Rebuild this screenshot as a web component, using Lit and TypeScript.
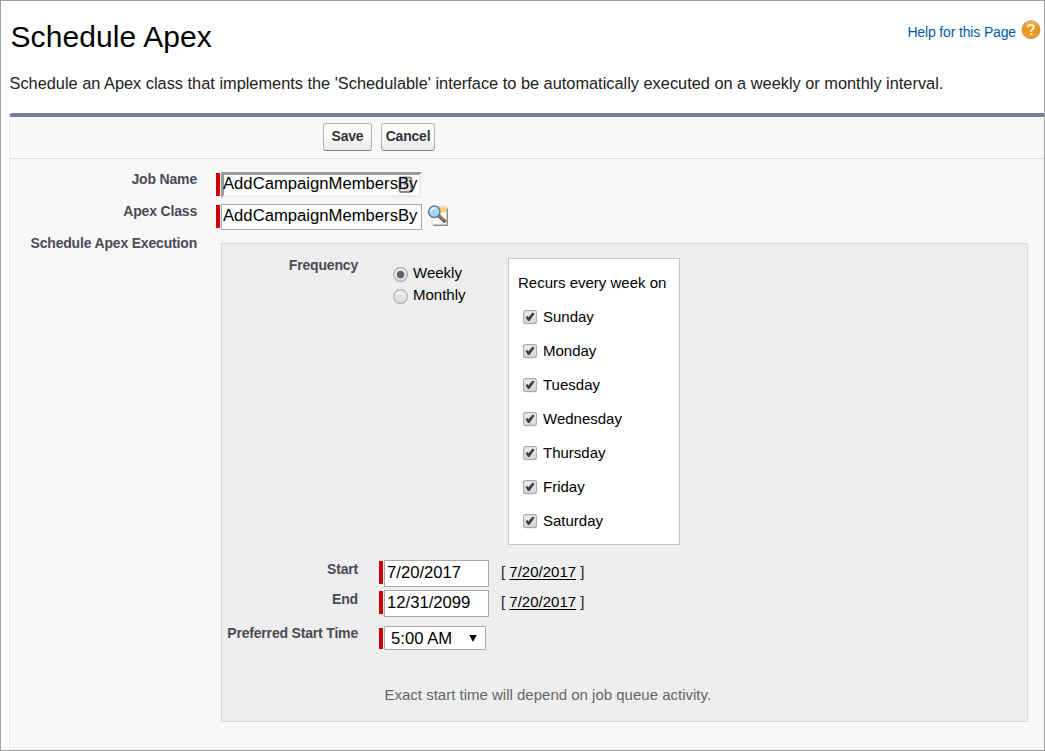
import { LitElement, html, css, svg } from "lit";
import { customElement, property, state } from "lit/decorators.js";

@customElement("tick-box")
class TickBox extends LitElement {
  @property({ type: Boolean }) checked = false;
  static styles = css`
    :host { display: block; width: 14px; height: 15px; }
    svg { display: block; }
  `;
  render() {
    return html`<svg width="14" height="15" viewBox="0 0 14 15">
      <defs><linearGradient id="g" x1="0" y1="0" x2="0" y2="1"><stop offset="0" stop-color="#eeeeee"/><stop offset="1" stop-color="#d9d9d9"/></linearGradient></defs>
      <rect x="0.8" y="1.6" width="12.4" height="12.8" rx="2" fill="#e3e3e3"/>
      <rect x="0.6" y="0.6" width="12.8" height="12.8" rx="2" fill="url(#g)" stroke="#acacac" stroke-width="1.1"/>
      ${this.checked ? svg`<path d="M2.5 7.3 L4.2 5.9 L5.6 7.2 L9.6 2.5 L11.6 3.8 L6.5 11 L5 11 Z" fill="#404040"/>` : ""}
    </svg>`;
  }
}

@customElement("radio-dot")
class RadioDot extends LitElement {
  @property({ type: Boolean }) checked = false;
  static styles = css`
    :host { display: block; width: 15px; height: 16px; }
    svg { display: block; }
  `;
  render() {
    return html`<svg width="15" height="16" viewBox="0 0 15 16">
      <defs><linearGradient id="g" x1="0" y1="0" x2="0" y2="1"><stop offset="0" stop-color="#efefef"/><stop offset="1" stop-color="#dcdcdc"/></linearGradient></defs>
      <circle cx="7.5" cy="8.3" r="7" fill="#dcdcdc"/>
      <circle cx="7.5" cy="7.5" r="6.9" fill="url(#g)" stroke="#acacac" stroke-width="1.1"/>
      ${this.checked ? svg`<circle cx="7.5" cy="7.5" r="3.7" fill="#636363"/>` : ""}
    </svg>`;
  }
}

@customElement("app-root")
class AppRoot extends LitElement {
  @state() frequency = "Weekly";
  days = ["Sunday", "Monday", "Tuesday", "Wednesday", "Thursday", "Friday", "Saturday"];

  static styles = css`
    :host {
      display: block;
      font-family: "Liberation Sans", Arial, sans-serif;
      font-size: 15px;
      color: #000;
    }
    * { box-sizing: border-box; }
    .page {
      width: 1045px;
      height: 751px;
      border: 1px solid #a2a2a2;
      background: #fff;
      padding-left: 8px;
      overflow: hidden;
      display: flex;
      flex-direction: column;
    }
    .head { display: flex; justify-content: space-between; height: 66px; }
    h1 { margin: 0; padding: 18px 0 0 1.5px; font-weight: 400; font-size: 30px; letter-spacing: 0.1px; line-height: 36px; }
    .help { display: flex; gap: 5px; padding: 19px 3px 0 0; height: 60px; }
    .help a { font-size: 14px; letter-spacing: -0.15px; line-height: 25px; color: #015ba7; }
    .help svg { display: block; }
    .intro { margin: 0; height: 46px; padding: 5px 0 0 0.5px; font-size: 16.35px; line-height: 22px; color: #222; white-space: nowrap; }
    .block {
      flex: 1;
      background: #f8f8f8;
      border-top: 4px solid #747e96;
      border-left: 1px solid #eaeaea;
      border-top-left-radius: 4px;
    }
    .buttons { height: 42px; border-bottom: 1px solid #dbdbdb; padding: 6px 0 0 313px; display: flex; gap: 9px; }
    button {
      height: 28px;
      padding: 0 0 2px;
      margin: 0;
      border: 1px solid #b5b5b5;
      border-bottom-color: #7f7f7f;
      border-radius: 3px;
      background: linear-gradient(#fff 0%, #fcfcfc 45%, #e9e9ea 100%);
      font: bold 14px/24px "Liberation Sans", Arial, sans-serif;
      letter-spacing: -0.2px;
      color: #333;
    }
    .save { width: 49px; }
    .cancel { width: 54px; }
    .form { padding-top: 13px; }
    .row { display: flex; height: 32px; }
    .last { height: auto; padding-top: 7px; }
    .label {
      font-weight: bold;
      font-size: 14px;
      letter-spacing: -0.18px;
      line-height: 14px;
      color: #4a4a56;
      text-align: right;
      white-space: nowrap;
    }
    .row > .label { width: 187px; margin-right: 19px; }
    .last > .label { margin: -7px 24px 0 0; }
    .req { width: 4px; height: 23px; background: #c00; margin: 1px 0 0; flex: none; }
    input {
      font: 16.67px "Liberation Sans", Arial, sans-serif;
      color: #000;
      appearance: none;
      border-radius: 0;
      background: #fff;
      margin: 0;
      outline: 0;
      border: 1px solid #a9a9a9;
      display: block;
    }
    .inset {
      width: 201px; height: 26px;
      border: 3px solid;
      border-color: #9a9a9a #eee #eee #9a9a9a;
      margin-left: 1px;
      background: #fff;
      display: flex;
    }
    .inset input { border: 0; width: 197px; flex: none; padding: 0; height: 20px; margin: -1px -2px 0 -1px; background: transparent; position: relative; }
    .stack { display: flex; position: relative; }
    .chip { position: absolute; right: 8px; top: 4px; }
    .lookup { width: 201px; height: 26px; padding: 0 0 3px 1px; margin-left: 1px; }
    .lens { display: block; margin: 1px 0 0 5px; }
    .panel { width: 807px; height: 479px; background: #eee; border: 1px solid #d9d9d9; padding-top: 14px; }
    .freq { display: flex; height: 287px; }
    .panel .label { width: 136px; flex: none; }
    .radios { margin-left: 35px; width: 115px; padding-top: 4px; }
    .radio { display: flex; gap: 5px; height: 22px; line-height: 22px; }
    .radio radio-dot { margin-top: 5px; }
    .box { width: 172px; height: 287px; background: #fff; border: 1px solid #c7c7c7; padding: 7px 0 0 9px; line-height: 34px; white-space: nowrap; }
    .day { display: flex; height: 34px; }
    .day tick-box { margin: 10px 6px 0 5px; }
    .line { display: flex; height: 30px; }
    .line .req { margin: 1px 0 0 21px; }
    .dates { padding-top: 15px; }
    .line input { width: 105px; height: 27px; padding: 0 0 2px 2px; margin-left: 1px; }
    .line .label { line-height: 18px; }
    .quick { margin-left: 12px; line-height: 24px; color: #222; white-space: pre; }
    .quick u { color: #000; text-underline-offset: 2px; text-decoration-thickness: 1px; }
    .time { padding-top: 6px; height: 66px; }
    .time .label { line-height: 14px; }
    .time .req { height: 21px; margin-top: 2px; }
    .select {
      width: 102px; height: 24px; margin-left: 1px;
      border: 1px solid #a9a9a9; border-radius: 1px; background: #fff;
      display: flex; justify-content: space-between;
      padding: 0 8px 0 6px;
      font-size: 16.67px; line-height: 23px;
    }
    .select svg { display: block; margin-top: 8px; }
    .note { padding: 0 0 0 162.5px; margin-top: -1px; line-height: 20px; color: #666; }
  `;

  dateLine(label: string, value: string) {
    return html`<div class="line">
      <span class="label">${label}</span><i class="req"></i>
      <input aria-label=${label} .value=${value} />
      <span class="quick">[ <u>7/20/2017</u> ]</span>
    </div>`;
  }

  render() {
    return html`<div class="page">
      <div class="head">
        <h1>Schedule Apex</h1>
        <div class="help"><a>Help for this Page</a>
          <svg width="20" height="20" viewBox="0 0 20 20">
            <defs><linearGradient id="o" x1="0" y1="0" x2="0" y2="1"><stop offset="0" stop-color="#f3b75c"/><stop offset=".45" stop-color="#ed951b"/><stop offset="1" stop-color="#f2a01f"/></linearGradient></defs>
            <circle cx="10" cy="9.7" r="9" fill="url(#o)" stroke="#b98a4c" stroke-width=".8"/>
            <path d="M7 7.5 C7 4.2 12.8 4.3 12.8 7.4 C12.8 9.4 10.1 9.3 10.1 11.8" fill="none" stroke="#fff6e6" stroke-width="2"/>
            <rect x="9.1" y="13" width="2.1" height="2" fill="#fff6e6"/>
          </svg>
        </div>
      </div>
      <p class="intro">Schedule an Apex class that implements the 'Schedulable' interface to be automatically executed on a weekly or monthly interval.</p>
      <div class="block">
        <div class="buttons"><button class="save">Save</button><button class="cancel">Cancel</button></div>
        <div class="form">
          <div class="row"><span class="label">Job Name</span><i class="req"></i>
            <div class="stack"><div class="inset">
              <svg class="chip" width="16" height="18" viewBox="0 0 16 18"><rect x="1.5" y="1.5" width="12" height="14.5" rx="2" fill="#e6e6e6" stroke="#8b8b8b" stroke-width="2"/><path d="M6 5.5H9.5V12H6M6 8.7H9" stroke="#aaa" stroke-width="1.5" fill="none"/></svg>
              <input aria-label="Job Name" .value=${"AddCampaignMembersBy"} /></div></div>
          </div>
          <div class="row"><span class="label">Apex Class</span><i class="req"></i>
            <input class="lookup" aria-label="Apex Class" .value=${"AddCampaignMembersBy"} />
            <svg class="lens" width="22" height="22" viewBox="0 0 22 22">
              <rect x="6.5" y="3.5" width="14.5" height="17.5" fill="#8e8e87"/>
              <rect x="5" y="2" width="14.5" height="17.5" fill="#fbfbf8" stroke="#c9c7b8" stroke-width=".7"/>
              <rect x="11.5" y="2.5" width="7.5" height="4.8" fill="#f8cf70"/>
              <path d="M11.5 10.5 L17.3 16" stroke="#655d55" stroke-width="3.6" stroke-linecap="round"/>
              <path d="M12.2 10.8 L16.8 15.2" stroke="#a6896c" stroke-width="1.2" stroke-linecap="round"/>
              <circle cx="7.3" cy="6.7" r="5.7" fill="#a9d7f0" stroke="#5b7d99" stroke-width="1.5"/>
              <path d="M3.7 6.4 C4.1 3.8 6.8 2.6 9 3.4" stroke="#e9f7ff" stroke-width="1.8" fill="none"/>
            </svg>
          </div>
          <div class="row last"><span class="label">Schedule Apex Execution</span>
            <div class="panel">
              <div class="freq"><span class="label">Frequency</span>
                <div class="radios">
                  ${["Weekly", "Monthly"].map((f) => html`<div class="radio" @click=${() => (this.frequency = f)}><radio-dot ?checked=${this.frequency === f}></radio-dot><span>${f}</span></div>`)}
                </div>
                <div class="box">Recurs every week on
                  ${this.days.map((d) => html`<div class="day"><tick-box checked></tick-box>${d}</div>`)}
                </div>
              </div>
              <div class="dates">${this.dateLine("Start", "7/20/2017")}${this.dateLine("End", "12/31/2099")}</div>
              <div class="line time"><span class="label">Preferred Start Time</span><i class="req"></i>
                <div class="select">5:00 AM<svg width="8" height="7" viewBox="0 0 8 7"><path d="M0.3 0H7.7L4 7Z"/></svg></div>
              </div>
              <div class="note">Exact start time will depend on job queue activity.</div>
            </div>
          </div>
        </div>
      </div>
    </div>`;
  }
}
